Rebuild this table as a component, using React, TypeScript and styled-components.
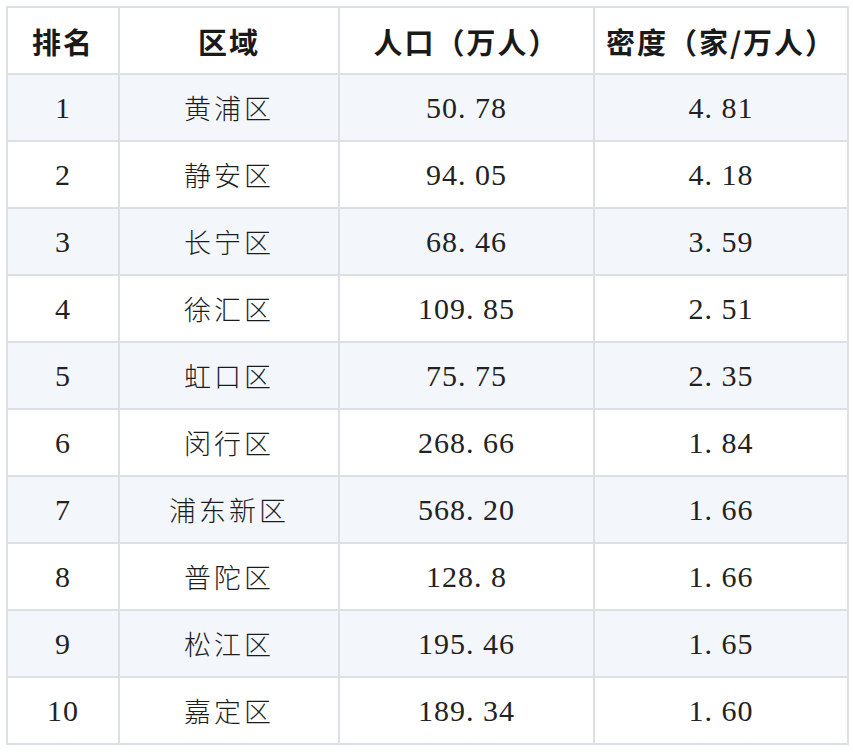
import React from "react";
import styled, { createGlobalStyle } from "styled-components";

const GlobalStyle = createGlobalStyle`
  html, body {
    margin: 0;
    padding: 0;
    background: #ffffff;
  }
  body {
    font-family: "Liberation Serif", "DejaVu Serif", serif;
    color: #1f1f1f;
  }
`;

const Page = styled.div`
  padding: 6px 6px 0 6px;
`;

const Table = styled.table`
  width: 841px;
  border-collapse: collapse;
  table-layout: fixed;
  border: 2px solid #dcdfe3;
`;

const Col = styled.col<{ $w: number }>`
  width: ${(p) => p.$w}px;
`;

const HeadCell = styled.th`
  height: 67px;
  padding: 0;
  border: 2px solid #dcdfe3;
  background: #ffffff;
  font-family: "Noto Sans CJK SC", sans-serif;
  font-weight: 700;
  font-size: 29px;
  letter-spacing: 2px;
  color: #1a1a1a;
  text-align: center;
  vertical-align: middle;
  box-sizing: border-box;
`;

const Row = styled.tr<{ $shade: boolean }>`
  background: ${(p) => (p.$shade ? "#f3f7fc" : "#ffffff")};
`;

const BaseCell = styled.td`
  height: 67px;
  padding: 0;
  border: 2px solid #dcdfe3;
  text-align: center;
  vertical-align: middle;
  box-sizing: border-box;
  color: #222222;
`;

const NumCell = styled(BaseCell)`
  font-family: "Liberation Serif", "Times New Roman", "DejaVu Serif", serif;
  font-weight: 400;
  font-size: 30px;
  letter-spacing: 1px;
`;

const NameCell = styled(BaseCell)`
  font-family: "Noto Sans CJK SC", sans-serif;
  font-weight: 300;
  font-size: 27px;
  letter-spacing: 3px;
  color: #1c1c1c;
`;

const rows: [string, string, string, string][] = [
  ["1", "黄浦区", "50.78", "4.81"],
  ["2", "静安区", "94.05", "4.18"],
  ["3", "长宁区", "68.46", "3.59"],
  ["4", "徐汇区", "109.85", "2.51"],
  ["5", "虹口区", "75.75", "2.35"],
  ["6", "闵行区", "268.66", "1.84"],
  ["7", "浦东新区", "568.20", "1.66"],
  ["8", "普陀区", "128.8", "1.66"],
  ["9", "松江区", "195.46", "1.65"],
  ["10", "嘉定区", "189.34", "1.60"],
];

const fmt = (s: string) => s.replace(".", ". ");

export default function App() {
  return (
    <>
      <GlobalStyle />
      <Page>
        <Table>
          <colgroup>
            <Col $w={112} />
            <Col $w={220} />
            <Col $w={255} />
            <Col $w={254} />
          </colgroup>
          <thead>
            <tr>
              <HeadCell>排名</HeadCell>
              <HeadCell>区域</HeadCell>
              <HeadCell>人口（万人）</HeadCell>
              <HeadCell>密度（家/万人）</HeadCell>
            </tr>
          </thead>
          <tbody>
            {rows.map((r, i) => (
              <Row key={r[0]} $shade={i % 2 === 0}>
                <NumCell>{r[0]}</NumCell>
                <NameCell>{r[1]}</NameCell>
                <NumCell>{fmt(r[2])}</NumCell>
                <NumCell>{fmt(r[3])}</NumCell>
              </Row>
            ))}
          </tbody>
        </Table>
      </Page>
    </>
  );
}
